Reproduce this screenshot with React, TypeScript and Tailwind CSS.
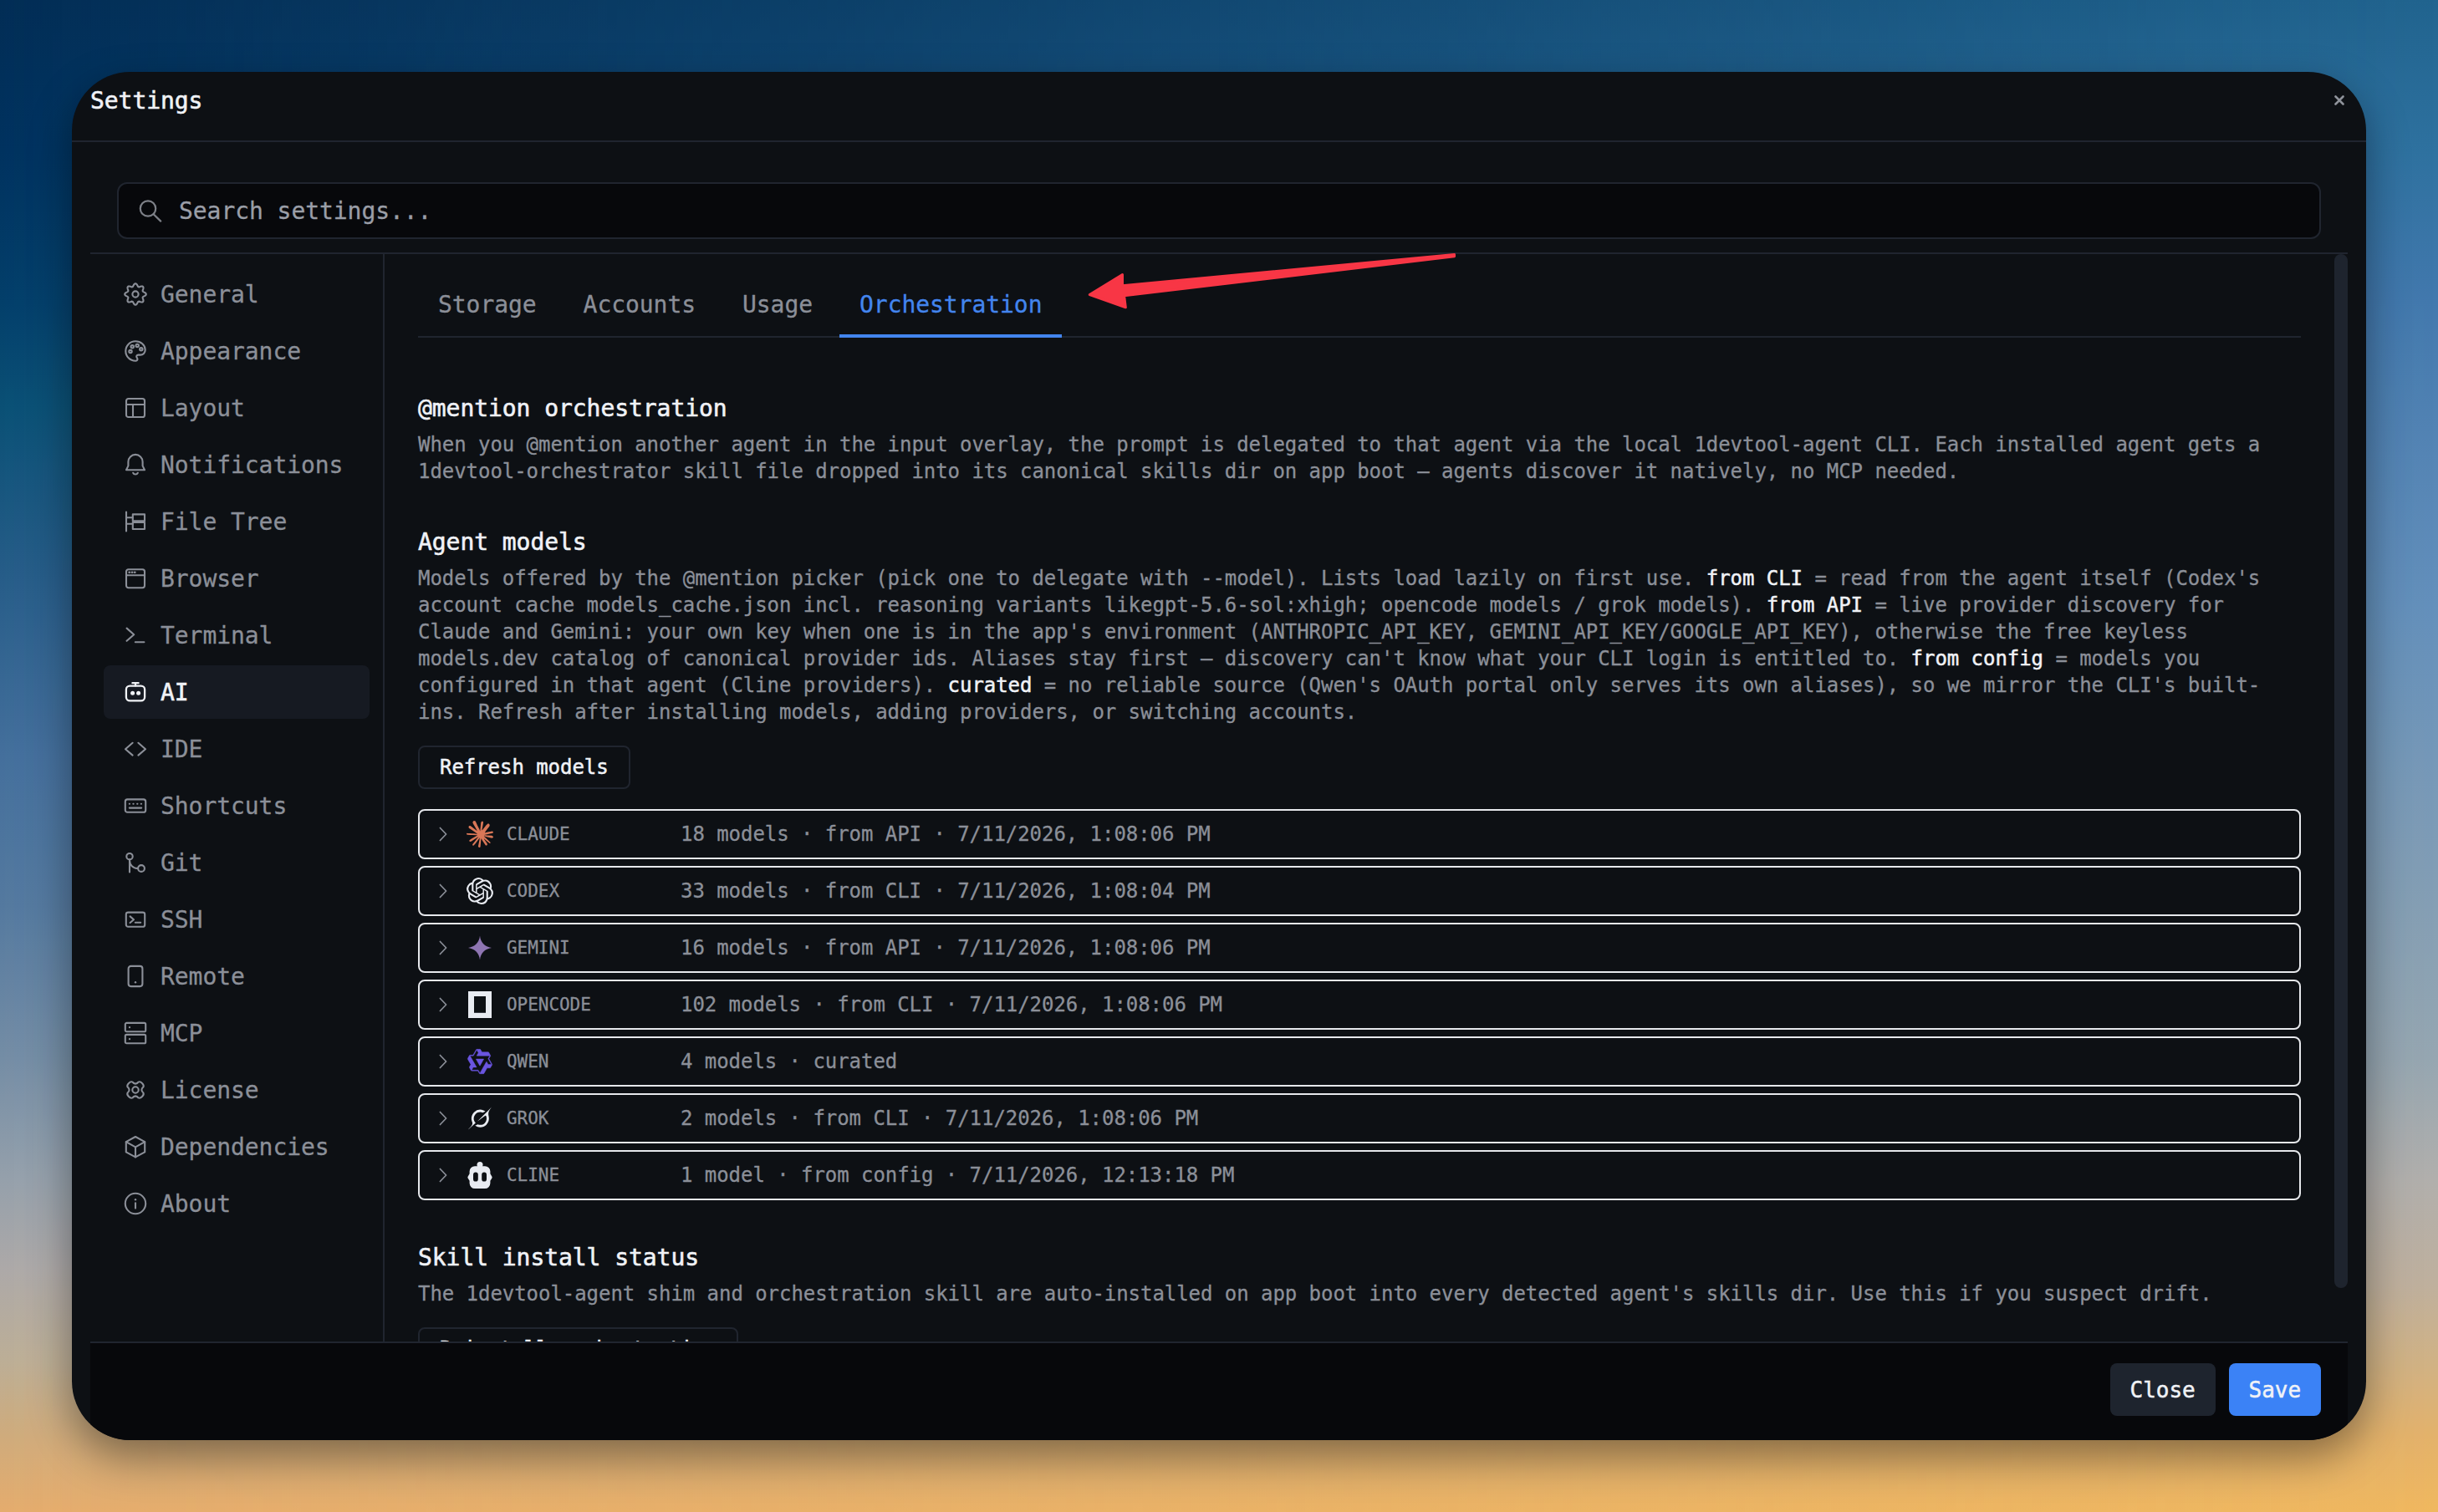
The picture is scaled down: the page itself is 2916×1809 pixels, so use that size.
import { FC, ReactNode } from "react";
import { SiOpenai } from "react-icons/si";

interface INavItem {
  label: string;
  icon: ReactNode;
}

interface IAgent {
  name: string;
  summary: string;
  logo: ReactNode;
}

const GEAR_POINTS = Array.from({ length: 96 }, (_, i) => {
  const angle = (i / 96) * Math.PI * 2;
  const radius = 11.1 + 1.7 * Math.cos(angle * 8);
  const x = 14 + radius * Math.sin(angle);
  const y = 14 - radius * Math.cos(angle);
  return `${x.toFixed(2)},${y.toFixed(2)}`;
}).join(" ");

const navItems: INavItem[] = [
  {
    label: "General",
    icon: (
      <>
        <polygon points={GEAR_POINTS} />
        <circle cx="14" cy="14" r="3.6" />
      </>
    ),
  },
  {
    label: "Appearance",
    icon: (
      <>
        <path d="M14 25.7a1.2 1.2 0 0 1 0-23.4c6.4 0 11.7 4.6 11.7 10.5a5.8 5.8 0 0 1-5.8 5.8h-2.6a2 2 0 0 0-1.6 3.3l.3.5a2 2 0 0 1-1.6 3.3z" />
        <circle cx="8" cy="14.6" r="1.7" />
        <circle cx="10.2" cy="8.8" r="1.7" />
        <circle cx="16.2" cy="7.4" r="1.7" />
        <circle cx="20.8" cy="11.8" r="1.7" />
      </>
    ),
  },
  {
    label: "Layout",
    icon: (
      <>
        <rect x="3" y="3" width="22" height="22" rx="2.6" />
        <path d="M3 10h22M11 10v15" />
      </>
    ),
  },
  {
    label: "Notifications",
    icon: (
      <>
        <path d="M3 20.2l2.4-4.8v-4.9a8.6 8.6 0 0 1 17.2 0v4.9l2.4 4.8z" />
        <path d="M11.2 23.8a3.1 3.1 0 0 0 5.6 0" />
      </>
    ),
  },
  {
    label: "File Tree",
    icon: (
      <>
        <path d="M3 2.6v22.8M3 9.3h7.6M3 16.7h7.6" />
        <rect x="10.8" y="5.4" width="14.2" height="8" />
        <rect x="10.8" y="15" width="14.2" height="8" />
      </>
    ),
  },
  {
    label: "Browser",
    icon: (
      <>
        <rect x="3" y="3.2" width="22" height="22" rx="2.6" />
        <path d="M3 10.2h22" />
        <path d="M6.6 6.7h.3M9.9 6.7h.3M13.1 6.7h.3" strokeWidth="2.6" />
      </>
    ),
  },
  {
    label: "Terminal",
    icon: <path d="M3.6 5.6l8.6 7.6-8.6 7.6M13.8 22.3h10.6" />,
  },
  {
    label: "AI",
    icon: (
      <g strokeWidth="2.3">
        <rect x="2.9" y="6.6" width="22.2" height="17.8" rx="4.4" />
        <path d="M14 3.4v3M10.4 3.2h7.2" />
        <circle cx="10.6" cy="15.2" r="2.5" fill="currentColor" stroke="none" />
        <circle cx="17.6" cy="15.2" r="2.5" fill="currentColor" stroke="none" />
      </g>
    ),
  },
  {
    label: "IDE",
    icon: <path d="M10.6 6.8L2 14.2l8.6 7.4M17.4 6.8l8.6 7.4-8.6 7.4" />,
  },
  {
    label: "Shortcuts",
    icon: (
      <>
        <rect x="1.8" y="6.4" width="24.4" height="15.4" rx="2.6" />
        <path d="M6.8 11.7h.2M11.4 11.7h.2M16.2 11.7h.2M20.8 11.7h.2M6.8 16.6h14.4" />
      </>
    ),
  },
  {
    label: "Git",
    icon: (
      <>
        <circle cx="7" cy="6.7" r="3.7" />
        <circle cx="21" cy="21" r="3.9" />
        <path d="M7 10.4v15M7 11.5c0 5.2 4 9.5 10.1 9.5" />
      </>
    ),
  },
  {
    label: "SSH",
    icon: (
      <>
        <rect x="2.8" y="5.6" width="22.4" height="17.2" rx="2.4" />
        <path d="M7.6 10.4l4.4 3.8-4.4 3.8M13.8 17.8h6.4" />
      </>
    ),
  },
  {
    label: "Remote",
    icon: (
      <>
        <rect x="5.6" y="1.9" width="16.8" height="24.2" rx="3" />
        <circle cx="14" cy="21.2" r="1.2" fill="currentColor" stroke="none" />
      </>
    ),
  },
  {
    label: "MCP",
    icon: (
      <>
        <rect x="1.8" y="1.9" width="24.4" height="10.4" rx="1.6" />
        <rect x="1.8" y="15.9" width="24.4" height="10.4" rx="1.6" />
        <circle cx="7" cy="7.1" r="1.2" fill="currentColor" stroke="none" />
        <circle cx="7" cy="21.1" r="1.2" fill="currentColor" stroke="none" />
      </>
    ),
  },
  {
    label: "License",
    icon: (
      <>
        <path d="M14 6.6Q16.2 6.4 17.4 4.6Q19.6 3.5 22 6Q24.5 8.4 23.4 10.6Q21.6 11.8 21.4 14Q21.6 16.2 23.4 17.4Q24.5 19.6 22 22Q19.6 24.5 17.4 23.4Q16.2 21.6 14 21.4Q11.8 21.6 10.6 23.4Q8.4 24.5 6 22Q3.5 19.6 4.6 17.4Q6.4 16.2 6.6 14Q6.4 11.8 4.6 10.6Q3.5 8.4 6 6Q8.4 3.5 10.6 4.6Q11.8 6.4 14 6.6z" />
        <circle cx="14" cy="14" r="3.7" />
      </>
    ),
  },
  {
    label: "Dependencies",
    icon: (
      <>
        <path d="M14 2l11.2 6.2v12.2L14 26.4 2.8 20.4V8.2z" />
        <path d="M2.8 8.2L14 14.3l11.2-6.1M14 14.3v12.1" />
      </>
    ),
  },
  {
    label: "About",
    icon: (
      <>
        <circle cx="14" cy="14" r="12.2" />
        <path d="M14 13.4v6.2" />
        <circle cx="14" cy="9.2" r="1.2" fill="currentColor" stroke="none" />
      </>
    ),
  },
];

const tabs = ["Storage", "Accounts", "Usage", "Orchestration"];

const ClaudeLogo = () => (
  <svg viewBox="0 0 24 24" className="size-8 text-[#d97757]" fill="currentColor">
    <path d="M4.709 15.955l4.72-2.647.08-.23-.08-.128H9.2l-.79-.048-2.698-.073-2.339-.097-2.266-.122-.571-.121L0 11.784l.055-.352.48-.321.686.06 1.52.103 2.278.158 1.652.097 2.449.255h.389l.055-.157-.134-.098-.103-.097-2.358-1.596-2.552-1.688-1.336-.972-.724-.491-.364-.462-.158-1.008.656-.722.881.06.225.061.893.686 1.908 1.476 2.491 1.833.365.304.145-.103.019-.073-.164-.274-1.355-2.446-1.446-2.49-.644-1.032-.17-.619a2.97 2.97 0 01-.104-.729L6.283.134 6.696 0l.996.134.42.364.62 1.414 1.002 2.229 1.555 3.03.456.898.243.832.091.255h.158V9.01l.128-1.706.237-2.095.23-2.695.08-.76.376-.91.747-.492.584.28.48.685-.067.444-.286 1.851-.559 2.903-.364 1.942h.212l.243-.242.985-1.306 1.652-2.064.73-.82.85-.904.547-.431h1.033l.76 1.129-.34 1.166-1.064 1.347-.881 1.142-1.264 1.7-.79 1.36.073.11.188-.02 2.856-.606 1.543-.28 1.841-.315.833.388.091.395-.328.807-1.969.486-2.309.462-3.439.813-.042.03.049.061 1.549.146.662.036h1.622l3.02.225.79.522.474.638-.079.485-1.215.62-1.64-.389-3.829-.91-1.312-.329h-.182v.11l1.093 1.068 2.006 1.81 2.509 2.33.127.578-.322.455-.34-.049-2.205-1.657-.851-.747-1.926-1.62h-.128v.17l.444.649 2.345 3.521.122 1.08-.17.353-.608.213-.668-.122-1.374-1.925-1.415-2.167-1.143-1.943-.14.08-.674 7.254-.316.37-.729.28-.607-.461-.322-.747.322-1.476.389-1.924.315-1.53.286-1.9.17-.632-.012-.042-.14.018-1.434 1.967-2.18 2.945-1.726 1.845-.414.164-.717-.37.067-.662.401-.589 2.388-3.036 1.44-1.882.93-1.086-.006-.158h-.055L4.132 18.56l-1.13.146-.487-.456.061-.746.231-.243 1.908-1.312-.006.006z" />
  </svg>
);

const GeminiLogo = () => (
  <svg viewBox="0 0 32 32" className="size-8 text-[#8e75b2]" fill="currentColor">
    <path d="M16 1.5C16.9 9.6 21.6 14.6 30 16C21.6 17.4 16.9 22.4 16 30.5C15.1 22.4 10.4 17.4 2 16C10.4 14.6 15.1 9.6 16 1.5z" />
  </svg>
);

const OpencodeLogo = () => (
  <svg viewBox="0 0 32 32" className="size-8">
    <path d="M2 0h28v32H2z" fill="#e8ebf1" />
    <path d="M9 6h14v20H9z" fill="#0d1014" />
    <path d="M9 25h14v1H9z" fill="#3a3e46" />
  </svg>
);

const QwenLogo = () => (
  <svg
    viewBox="0 0 24 24"
    className="size-8 text-[#6a55e0]"
    fill="currentColor"
    stroke="currentColor"
    strokeWidth="0.35"
  >
    <path d="M12.604 1.34c.393.69.784 1.382 1.174 2.075a.18.18 0 00.157.091h5.552c.174 0 .322.11.446.327l1.454 2.57c.19.337.24.478.024.837-.26.43-.513.864-.76 1.3l-.367.658c-.106.196-.223.28-.04.512l2.652 4.637c.172.301.111.494-.043.77-.437.785-.882 1.564-1.335 2.34-.159.272-.352.375-.68.37-.777-.016-1.552-.01-2.327.016a.099.099 0 00-.081.05 575.097 575.097 0 01-2.705 4.74c-.169.293-.38.363-.725.364-.997.003-2.002.004-3.017.002a.537.537 0 01-.465-.271l-1.335-2.323a.09.09 0 00-.083-.049H4.982c-.285.03-.553-.001-.805-.092l-1.603-2.77a.543.543 0 01-.002-.54l1.207-2.12a.198.198 0 000-.197 550.951 550.951 0 01-1.875-3.272l-.79-1.395c-.16-.31-.173-.496.095-.965.465-.813.927-1.625 1.387-2.436.132-.234.304-.334.584-.335a338.3 338.3 0 012.589-.001.124.124 0 00.107-.063l2.806-4.895a.488.488 0 01.422-.246c.524-.001 1.053 0 1.583-.006L11.704 1c.341-.003.724.032.9.34zm-3.432.403a.06.06 0 00-.052.03L6.254 6.788a.157.157 0 01-.135.078H3.253c-.056 0-.07.025-.041.074l5.81 10.156c.025.042.013.062-.034.063l-2.795.015a.218.218 0 00-.2.116l-1.32 2.31c-.044.078-.021.118.068.118l5.716.008c.046 0 .08.02.104.061l1.403 2.454c.046.081.092.082.139 0l5.006-8.76.783-1.382a.055.055 0 01.096 0l1.424 2.53a.122.122 0 00.107.062l2.763-.02a.04.04 0 00.035-.02.041.041 0 000-.04l-2.9-5.086a.108.108 0 010-.113l.293-.507 1.12-1.977c.024-.041.012-.062-.035-.062H9.2c-.059 0-.073-.026-.043-.077l1.434-2.505a.107.107 0 000-.114L9.225 1.774a.06.06 0 00-.053-.031zm6.29 8.02c.046 0 .058.02.034.06l-.832 1.465-2.613 4.585a.056.056 0 01-.05.029.058.058 0 01-.05-.029L8.498 9.841c-.02-.034-.01-.052.028-.054l.216-.012 6.722-.012z" />
  </svg>
);

const GrokLogo = () => (
  <svg viewBox="0 0 24 24" className="size-7 text-[#e8ebf1]" fill="currentColor">
    <path d="M9.27 15.29l7.978-5.897c.391-.29.95-.177 1.137.272.98 2.369.542 5.215-1.41 7.169-1.951 1.954-4.667 2.382-7.149 1.406l-2.711 1.257c3.889 2.661 8.611 2.003 11.562-.953 2.341-2.344 3.066-5.539 2.388-8.42l.006.007c-.983-4.232.242-5.924 2.75-9.383.06-.082.12-.164.179-.248l-3.301 3.305v-.01L9.267 15.292M7.623 16.723c-2.792-2.67-2.31-6.801.071-9.184 1.761-1.763 4.647-2.483 7.166-1.425l2.705-1.25a7.808 7.808 0 00-1.829-1A8.975 8.975 0 005.984 5.83c-2.533 2.536-3.33 6.436-1.962 9.764 1.022 2.487-.653 4.246-2.34 6.022-.599.63-1.199 1.259-1.682 1.925l7.62-6.815" />
  </svg>
);

const ClineLogo = () => (
  <svg viewBox="0 0 32 32" className="size-8 text-[#e8ebf1]">
    <circle cx="16" cy="3.6" r="3.5" fill="currentColor" />
    <path
      d="M10 5.2h12a6.4 6.4 0 0 1 6.4 6.4v2.6l2 3.6a1.6 1.6 0 0 1 0 1.6l-2 3.4v2.8a6.4 6.4 0 0 1-6.4 6.4H10a6.4 6.4 0 0 1-6.4-6.4v-2.8l-2-3.4a1.6 1.6 0 0 1 0-1.6l2-3.6v-2.6A6.4 6.4 0 0 1 10 5.2z"
      fill="currentColor"
    />
    <rect x="8" y="12.6" width="5.8" height="11" rx="2.9" fill="#0d1014" />
    <rect x="18.2" y="12.6" width="5.8" height="11" rx="2.9" fill="#0d1014" />
  </svg>
);

const agents: IAgent[] = [
  {
    name: "CLAUDE",
    summary: "18 models · from API · 7/11/2026, 1:08:06 PM",
    logo: <ClaudeLogo />,
  },
  {
    name: "CODEX",
    summary: "33 models · from CLI · 7/11/2026, 1:08:04 PM",
    logo: <SiOpenai className="size-8 text-[#e8ebf1]" />,
  },
  {
    name: "GEMINI",
    summary: "16 models · from API · 7/11/2026, 1:08:06 PM",
    logo: <GeminiLogo />,
  },
  {
    name: "OPENCODE",
    summary: "102 models · from CLI · 7/11/2026, 1:08:06 PM",
    logo: <OpencodeLogo />,
  },
  {
    name: "QWEN",
    summary: "4 models · curated",
    logo: <QwenLogo />,
  },
  {
    name: "GROK",
    summary: "2 models · from CLI · 7/11/2026, 1:08:06 PM",
    logo: <GrokLogo />,
  },
  {
    name: "CLINE",
    summary: "1 model · from config · 7/11/2026, 12:13:18 PM",
    logo: <ClineLogo />,
  },
];

const Backdrop = () => (
  <div className="absolute inset-0 bg-[linear-gradient(to_bottom,#21648f_0%,#2f72a0_10%,#4379ae_20%,#5585b5_30%,#6490bb_40%,#7598b8_50%,#859fb4_60%,#96a6b1_70%,#b1afac_78%,#bfb09d_85%,#d0b285_90%,#e3b26b_95%,#f0b85f_100%)]">
    <div className="h-full w-full bg-[linear-gradient(to_bottom,#022d55_0%,#00325f_10%,#033f6a_20%,#0a5075_27%,#265c88_38%,#446f9c_50%,#54799f_60%,#748da5_70%,#95a0ab_78%,#ada9a8_84%,#bcae96_90%,#cfab7c_95%,#e5ac6d_100%)] [mask-image:linear-gradient(to_right,black,transparent)]" />
  </div>
);

const Sidebar: FC<{ active: string }> = ({ active }) => (
  <nav className="w-[352px] shrink-0 border-r-2 border-[#20252f] p-4 flex flex-col gap-1">
    {navItems.map((item) => (
      <button
        key={item.label}
        className={`flex h-16 shrink-0 items-center gap-4 rounded-lg px-6 text-[28px] ${
          item.label === active
            ? "bg-[#161a22] text-[#f0f2f6] [-webkit-text-stroke:0.6px]"
            : "text-[#8b8f98]"
        }`}
      >
        <svg
          viewBox="0 0 28 28"
          className="size-7 shrink-0"
          fill="none"
          stroke="currentColor"
          strokeWidth="2.1"
          strokeLinecap="round"
          strokeLinejoin="round"
        >
          {item.icon}
        </svg>
        <span className="pt-0.5">{item.label}</span>
      </button>
    ))}
  </nav>
);

const Tabs: FC<{ active: string }> = ({ active }) => (
  <div className="mt-5 flex h-20 gap-2 border-b-2 border-[#20252f] text-[28px] leading-10">
    {tabs.map((tab) => (
      <button
        key={tab}
        className={`flex h-20 items-start px-6 pt-[21px] ${
          tab === active
            ? "border-b-4 border-[#4385ee] text-[#4385ee]"
            : "text-[#8b8f98]"
        }`}
      >
        <span>{tab}</span>
      </button>
    ))}
  </div>
);

const Heading: FC<{ children: ReactNode }> = ({ children }) => (
  <h3 className="-mb-0.5 text-[28px] leading-[42px] text-[#f0f2f6] [-webkit-text-stroke:0.6px]">
    {children}
  </h3>
);

const Description: FC<{ children: ReactNode }> = ({ children }) => (
  <p className="mt-2 text-2xl leading-8 text-[#8b8f98]">{children}</p>
);

const Source: FC<{ children: ReactNode }> = ({ children }) => (
  <span className="text-[#f0f2f6] [-webkit-text-stroke:0.5px]">{children}</span>
);

const OutlineButton: FC<{ children: ReactNode }> = ({ children }) => (
  <button className="mt-6 flex h-[52px] items-center rounded-lg border-2 border-[#20252f] px-6 text-2xl text-[#f0f2f6] [-webkit-text-stroke:0.5px]">
    {children}
  </button>
);

const AgentRow: FC<{ agent: IAgent }> = ({ agent }) => (
  <div className="flex h-[60px] items-center gap-4 rounded-lg border-2 border-[#e6e8ec] px-4 text-2xl text-[#8b8f98]">
    <svg
      viewBox="0 0 24 24"
      className="size-6"
      fill="none"
      stroke="currentColor"
      strokeWidth="1.7"
      strokeLinecap="round"
      strokeLinejoin="round"
    >
      <path d="M8.4 4.5l7.2 7.5-7.2 7.5" />
    </svg>
    <div className="flex size-8 items-center justify-center">{agent.logo}</div>
    <div className="w-48 text-[21px]">{agent.name}</div>
    <div>{agent.summary}</div>
  </div>
);

const Arrow = () => (
  <svg
    viewBox="0 0 450 80"
    className="absolute left-[1210px] top-[210px] h-20 w-[450px]"
    fill="#f83645"
    stroke="#f83645"
    strokeWidth="3"
    strokeLinejoin="round"
  >
    <path d="M7.3 56.5L46.5 32.5V45.7L443.5 8.6V10.8L48.6 57.8L50.3 71.8z" />
  </svg>
);

const App = () => {
  return (
    <div className="relative h-[1809px] w-[2916px] overflow-hidden p-[86px] font-['DejaVu_Sans_Mono',monospace] [-webkit-text-stroke:0.3px] [&_*]:tracking-[-0.00205em]">
      <Backdrop />
      <div className="relative flex h-[1637px] w-[2744px] rounded-[70px] shadow-[0_20px_50px_rgba(0,0,0,0.4)]">
        <div className="flex w-full flex-col overflow-hidden rounded-[70px] bg-[#0d1014]">
          <header className="flex h-[84px] shrink-0 items-start justify-between border-b-2 border-[#20252f] pl-[22px] pr-[26px] pt-[15px]">
            <h1 className="text-[28px] leading-10 text-[#f0f2f6] [-webkit-text-stroke:0.6px]">
              Settings
            </h1>
            <svg
              viewBox="0 0 12 12"
              className="mt-[13px] size-3 text-[#8f939b]"
              stroke="currentColor"
              strokeWidth="2.6"
              strokeLinecap="round"
            >
              <path d="M1.5 1.5l9 9M10.5 1.5l-9 9" />
            </svg>
          </header>

          <div className="mx-[22px] flex min-h-0 flex-1 flex-col">
            <div className="shrink-0 border-b-2 border-[#20252f] px-8 pb-4 pt-12">
              <div className="flex h-[68px] items-center gap-5 rounded-xl border-2 border-[#20252f] bg-[#07080b] px-6 text-[28px] text-[#9a9ea7]">
                <svg
                  viewBox="0 0 28 28"
                  className="size-7"
                  fill="none"
                  stroke="#7d8087"
                  strokeWidth="2.2"
                  strokeLinecap="round"
                >
                  <circle cx="11" cy="11.5" r="9.2" />
                  <path d="M17.6 18.2l8.6 8.4" />
                </svg>
                <span className="pt-0.5">Search settings...</span>
              </div>
            </div>

            <div className="flex h-[1301px] shrink-0">
              <Sidebar active="AI" />
              <main className="h-full min-w-0 flex-1 overflow-hidden px-10">
                <Tabs active="Orchestration" />

                <section className="mt-16">
                  <Heading>@mention orchestration</Heading>
                  <Description>
                    When you @mention another agent in the input overlay, the
                    prompt is delegated to that agent via the local
                    1devtool-agent CLI. Each installed agent gets a
                    1devtool-orchestrator skill file dropped into its canonical
                    skills dir on app boot — agents discover it natively, no MCP
                    needed.
                  </Description>
                </section>

                <section className="mt-12">
                  <Heading>Agent models</Heading>
                  <Description>
                    Models offered by the @mention picker (pick one to delegate
                    with --model). Lists load lazily on first use.{" "}
                    <Source>from CLI</Source> = read from the agent itself
                    (Codex's account cache models_cache.json incl. reasoning
                    variants likegpt-5.6-sol:xhigh; opencode models / grok
                    models). <Source>from API</Source> = live provider discovery
                    for Claude and Gemini: your own key when one is in the app's
                    environment (ANTHROPIC_API_KEY,
                    GEMINI_API_KEY/GOOGLE_API_KEY), otherwise the free keyless
                    models.dev catalog of canonical provider ids. Aliases stay
                    first — discovery can't know what your CLI login is entitled
                    to. <Source>from config</Source> = models you configured in
                    that agent (Cline providers). <Source>curated</Source> = no
                    reliable source (Qwen's OAuth portal only serves its own
                    aliases), so we mirror the CLI's built-ins. Refresh after
                    installing models, adding providers, or switching accounts.
                  </Description>
                  <OutlineButton>Refresh models</OutlineButton>
                  <div className="mt-6 flex flex-col gap-2">
                    {agents.map((agent) => (
                      <AgentRow key={agent.name} agent={agent} />
                    ))}
                  </div>
                </section>

                <section className="mt-12">
                  <Heading>Skill install status</Heading>
                  <Description>
                    The 1devtool-agent shim and orchestration skill are
                    auto-installed on app boot into every detected agent's
                    skills dir. Use this if you suspect drift.
                  </Description>
                  <OutlineButton>Reinstall orchestration</OutlineButton>
                </section>
              </main>
              <div className="h-[1237px] w-4 shrink-0 rounded-full bg-[#1e242e]" />
            </div>

            <footer className="flex flex-1 items-start justify-end gap-4 border-t-2 border-[#20252f] bg-[#07080b] px-8 pt-6 text-[26px] text-[#f0f2f6] [-webkit-text-stroke:0.5px]">
              <button className="h-[63px] rounded-lg bg-[#1e242e] px-6 pt-0.5">
                Close
              </button>
              <button className="h-[63px] rounded-lg bg-[#3b82f6] px-6 pt-0.5">
                Save
              </button>
            </footer>
          </div>
        </div>
        <Arrow />
      </div>
    </div>
  );
};

export default App;
